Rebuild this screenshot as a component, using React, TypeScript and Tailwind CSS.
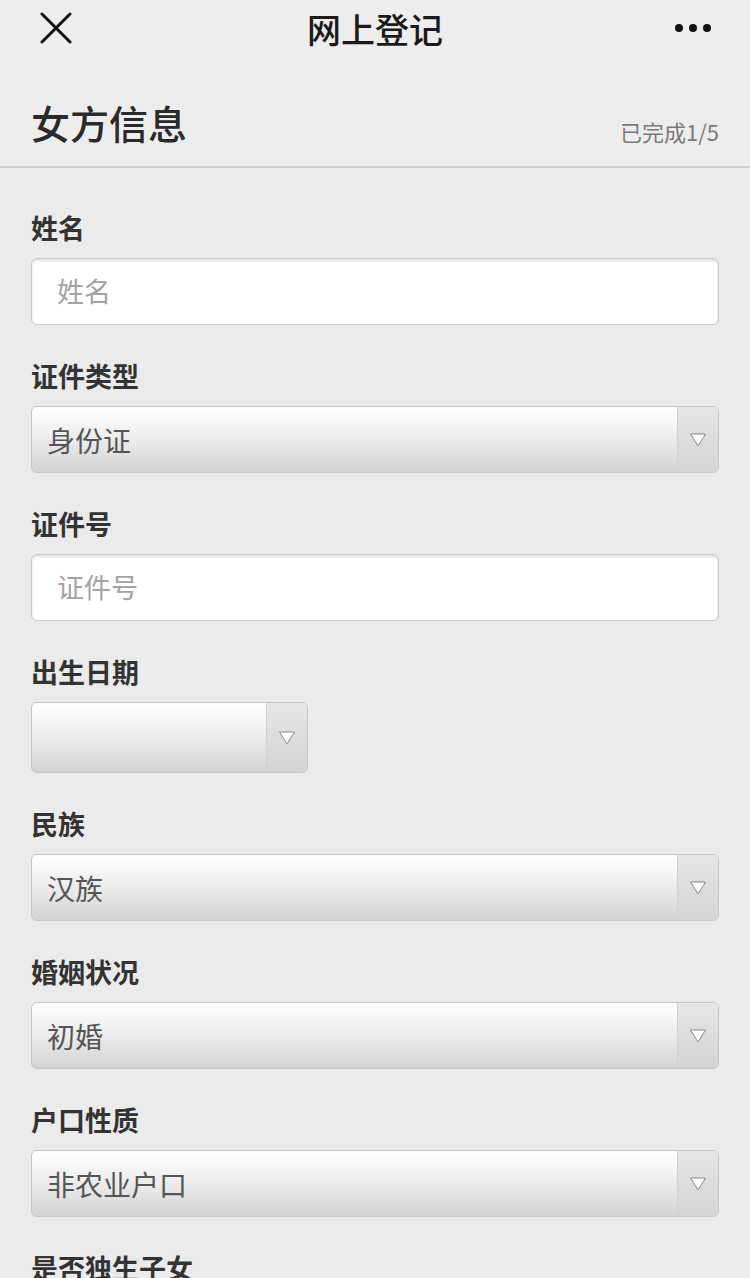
import React from "react";

const font = { fontFamily: '"Noto Sans CJK SC", "Noto Sans", sans-serif' };

function Label({ children }: { children: React.ReactNode }) {
  return (
    <div className="text-[27px] leading-[30px] font-bold text-[#333] mb-[15px]">{children}</div>
  );
}

function TextInput({ placeholder }: { placeholder: string }) {
  return (
    <div className="h-[67px] rounded-[6px] border border-[#c9c9c9] bg-white shadow-[inset_0_2px_3px_rgba(0,0,0,0.12)] flex items-center pl-[25px] text-[27px] text-[#a3a3a3]">
      {placeholder}
    </div>
  );
}

function Arrow() {
  return (
    <svg width="18" height="16" viewBox="0 0 18 16">
      <path d="M1.5 2 L16.5 2 L9 14 Z" fill="#ffffff" stroke="#8a8a8a" strokeWidth="1" strokeLinejoin="round" />
    </svg>
  );
}

function Select({ value, className = "", h = "h-[67px]" }: { value: string; className?: string; h?: string }) {
  return (
    <div
      className={`${h} ${className} rounded-[6px] border border-[#c6c6c6] bg-gradient-to-b from-[#ffffff] via-[#ececec] to-[#d3d3d3] flex items-stretch overflow-hidden`}
    >
      <div className="flex-1 flex items-center pl-[15px] text-[28px] text-[#555]">{value}</div>
      <div className="w-[41px] border-l border-[#d2d2d2] bg-gradient-to-b from-[#e6e6e6] to-[#d4d4d4] flex items-center justify-center">
        <Arrow />
      </div>
    </div>
  );
}

export default function App() {
  return (
    <div className="w-[750px] h-[1278px] overflow-hidden bg-[#ebebeb]" style={font}>
      <div className="bg-[#ededed]">
        <div className="h-[56px] flex items-center justify-between px-[40px] relative">
          <svg width="32" height="32" viewBox="0 0 32 32">
            <path d="M2 2 L30 30 M30 2 L2 30" stroke="#111" strokeWidth="3" strokeLinecap="round" />
          </svg>
          <div className="absolute left-0 right-0 top-0 h-[56px] flex items-center justify-center text-[34px] text-[#1a1a1a] font-medium">
            网上登记
          </div>
          <svg width="40" height="10" viewBox="0 0 40 10" className="mr-[-4px]">
            <circle cx="5" cy="5" r="4" fill="#111" />
            <circle cx="19" cy="5" r="4" fill="#111" />
            <circle cx="33" cy="5" r="4" fill="#111" />
          </svg>
        </div>
        <div className="h-[110px] flex items-start justify-between px-[31px] pt-[41px]">
          <div className="text-[39px] leading-[50px] text-[#2a2a2a] font-medium">女方信息</div>
          <div className="text-[22px] leading-[30px] text-[#7a7a7a] mt-[19px]">已完成1/5</div>
        </div>
      </div>
      <div className="h-[2px] bg-[#cfcfcf]" />
      <div className="px-[31px] pt-[45px] flex flex-col">
        <Label>姓名</Label>
        <TextInput placeholder="姓名" />
        <div className="h-[36px]" />
        <Label>证件类型</Label>
        <Select value="身份证" />
        <div className="h-[36px]" />
        <Label>证件号</Label>
        <TextInput placeholder="证件号" />
        <div className="h-[36px]" />
        <Label>出生日期</Label>
        <Select value="" className="w-[277px]" h="h-[71px]" />
        <div className="h-[36px]" />
        <Label>民族</Label>
        <Select value="汉族" />
        <div className="h-[36px]" />
        <Label>婚姻状况</Label>
        <Select value="初婚" />
        <div className="h-[36px]" />
        <Label>户口性质</Label>
        <Select value="非农业户口" />
        <div className="h-[36px]" />
        <Label>是否独生子女</Label>
      </div>
    </div>
  );
}
